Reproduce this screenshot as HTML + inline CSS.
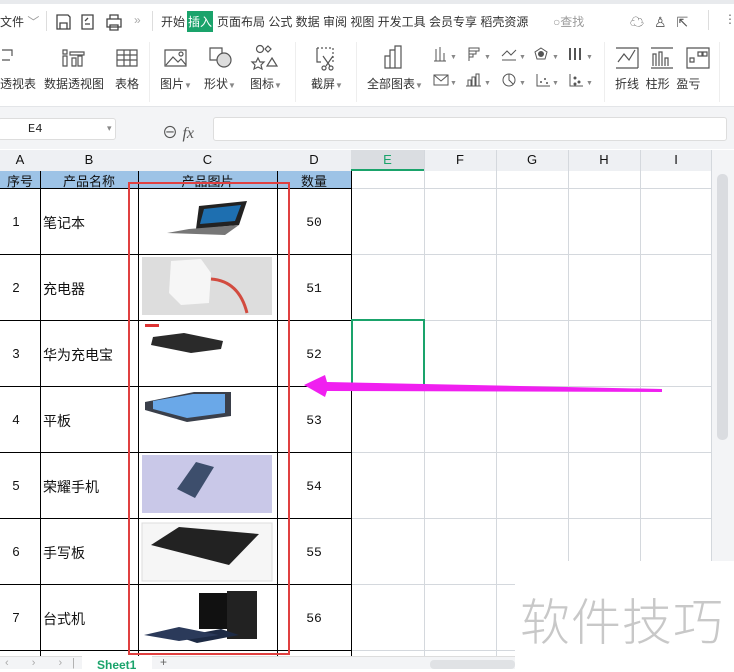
<!DOCTYPE html><html><head><meta charset="utf-8"><style>
*{margin:0;padding:0;box-sizing:border-box}
body{width:734px;height:669px;overflow:hidden;background:#fff;font-family:"Liberation Sans","Noto Sans CJK SC",sans-serif;position:relative;font-size:12px;color:#333}
.a{position:absolute}
.t{font-size:12px;white-space:nowrap}
.vl{position:absolute;width:1px;background:#d4d8dd}
.hz{position:absolute;height:1px;background:#d4d8dd}
.bk{position:absolute;background:#000}
.c{position:absolute;text-align:center;font-size:13px;color:#111}
</style></head><body>
<div class="a" style="left:0;top:0;width:734px;height:4px;background:#e8eaed"></div>
<div class="a t" style="left:0;top:13px">文件 <span style="color:#999">﹀</span></div>
<div class="a" style="left:46px;top:11px;width:1px;height:20px;background:#ddd"></div>
<svg class="a" style="left:54px;top:12px" width="75" height="20" fill="none" stroke="#444" stroke-width="1.3">
<path d="M3 3h11l2 2v12H3zM6 17v-6h7v6"/><path d="M28 3h11v14H28zM31 9l3-3M31 12h5"/><path d="M53 7h14v8H53zM56 7V3h8v4M56 13h8v5h-8z"/></svg>
<div class="a t" style="left:134px;top:13px;color:#aaa">»</div>
<div class="a" style="left:152px;top:11px;width:1px;height:20px;background:#ddd"></div>
<div class="a t" style="left:161px;top:13px">开始</div>
<div class="a t" style="left:187px;top:11px;background:#1aa36b;color:#fff;padding:2px 1px">插入</div>
<div class="a t" style="left:217px;top:13px">页面布局 公式 数据 审阅 视图 开发工具 会员专享 稻壳资源</div>
<div class="a t" style="left:553px;top:13px;color:#999">○查找</div>
<div class="a t" style="left:630px;top:12px;color:#555;font-size:14px;letter-spacing:10px">☁♙⇱</div>
<div class="a" style="left:708px;top:10px;width:1px;height:20px;background:#ddd"></div>
<div class="a t" style="left:724px;top:12px;color:#666">⋮</div>
<!-- ribbon -->
<div class="a t" style="left:0;top:75px">透视表</div>
<div class="a t" style="left:44px;top:75px">数据透视图</div>
<div class="a t" style="left:115px;top:75px">表格</div>
<div class="a" style="left:149px;top:42px;width:1px;height:60px;background:#eee"></div>
<div class="a t" style="left:160px;top:75px">图片<span style="font-size:8px;color:#888">▼</span></div>
<div class="a t" style="left:204px;top:75px">形状<span style="font-size:8px;color:#888">▼</span></div>
<div class="a t" style="left:250px;top:75px">图标<span style="font-size:8px;color:#888">▼</span></div>
<div class="a" style="left:295px;top:42px;width:1px;height:60px;background:#eee"></div>
<div class="a t" style="left:311px;top:75px">截屏<span style="font-size:8px;color:#888">▼</span></div>
<div class="a" style="left:356px;top:42px;width:1px;height:60px;background:#eee"></div>
<div class="a t" style="left:367px;top:75px">全部图表<span style="font-size:8px;color:#888">▼</span></div>
<div class="a" style="left:604px;top:42px;width:1px;height:60px;background:#eee"></div>
<div class="a t" style="left:615px;top:75px">折线&nbsp; 柱形&nbsp; 盈亏</div>
<div class="a" style="left:719px;top:42px;width:1px;height:60px;background:#eee"></div>
<svg class="a" style="left:0;top:44px" width="734" height="50" fill="none" stroke="#555" stroke-width="1.2">
<path d="M2 6h10v6M2 16h8"/><path d="M63 6h4v4h-4zM63 12h4v10h-4zM70 8h14v3H70zM72 14h4v8h-4zM78 12h4v10h-4z"/>
<path d="M117 6h20v16h-20zM117 11h20M117 16h20M124 6v16M130 6v16"/>
<path d="M165 6h21v16h-21zM166 21l7-8 5 5 3-3 5 6"/><circle cx="181" cy="10" r="2"/>
<path d="M210 4h12v12h-12z"/><circle cx="224" cy="16" r="7" fill="#ddd"/>
<circle cx="260" cy="5" r="3.5"/><path d="M268 2l3 3-3 3-3-3zM258 14l2 4 4 0-3 3 1 4-4-2-4 2 1-4-3-3 4 0zM272 14l5 8h-10z"/>
<path d="M317 4h16v14" stroke-dasharray="2 2"/><path d="M317 4v14h4"/><path d="M323 12l7 10M333 12l-7 10"/><circle cx="324" cy="24" r="2"/><circle cx="331" cy="24" r="2"/>
<path d="M385 12h5v12h-5zM390 6h5v18h-5zM395 2h6v22h-6z"/>
<g stroke-width="1">
<path d="M436 5v12M440 3v14M444 9v8M434 17h12"/><path d="M469 4h10v3h-10zM469 7h7v3h-7zM469 10h4v3h-4zM469 4v13"/><path d="M502 12l5-5 4 4 5-5M502 16h14"/><path d="M541 4l6 4-2 7h-8l-2-7z"/><circle cx="541" cy="10" r="2.5" fill="#555"/><path d="M570 4v12M575 4v12M580 4v12" stroke-width="2"/>
<path d="M434 31h14v10h-14zM434 31l7 6 7-6"/><path d="M468 42v-6h3v6M472 42v-9h3v9M476 42v-12h3v12M466 42h15"/><circle cx="509" cy="36" r="6"/><path d="M509 30v6l4 4"/><path d="M537 30v12h13"/><path d="M570 30v12h13"/>
</g>
<g fill="#555" stroke="none"><circle cx="541" cy="38" r="1"/><circle cx="545" cy="35" r="1"/><circle cx="547" cy="39" r="1"/><circle cx="575" cy="34" r="1.5"/><circle cx="579" cy="38" r="1.5"/><circle cx="575" cy="40" r="1.5"/></g>
<g fill="#888" stroke="none" font-size="7"><text x="450" y="15">▼</text><text x="484" y="15">▼</text><text x="519" y="15">▼</text><text x="552" y="15">▼</text><text x="586" y="15">▼</text><text x="450" y="41">▼</text><text x="484" y="41">▼</text><text x="519" y="41">▼</text><text x="552" y="41">▼</text><text x="586" y="41">▼</text></g>
<path d="M616 4h22v20M616 24h22M618 18l6-8 5 6 6-10"/>
<path d="M651 4h22M651 24h22M653 22v-12h3v12M659 22v-14h3v14M665 22v-8h3v8"/>
<path d="M687 4h22v20h-22zM690 14h4v4h-4zM698 8h4v4h-4zM703 8h4v4h-4z"/>
</svg>
<div class="a" style="left:0;top:106px;width:734px;height:1px;background:#e3e5e8"></div>
<!-- formula bar -->
<div class="a" style="left:0;top:107px;width:734px;height:42px;background:#f3f4f6"></div>
<div class="a" style="left:-2px;top:118px;width:118px;height:22px;background:#fff;border:1px solid #ddd;border-radius:3px"></div>
<div class="a t" style="left:28px;top:122px;font-family:'Liberation Mono',monospace;color:#222">E4</div>
<div class="a t" style="left:107px;top:123px;color:#888;font-size:9px">▾</div>
<div class="a t" style="left:162px;top:119px;font-size:16px;color:#555">⊖ <i style="font-family:'Liberation Serif',serif">fx</i></div>
<div class="a" style="left:213px;top:117px;width:514px;height:24px;background:#fff;border:1px solid #ddd;border-radius:3px"></div>
<!-- column headers -->
<div class="a" style="left:0;top:150px;width:712px;height:21px;background:#eef0f3"></div>
<div class="a" style="left:351px;top:150px;width:73px;height:21px;background:#dadde1;border-bottom:2px solid #1aa36b"></div>
<div class="c" style="left:0;width:40px;top:152px">A</div><div class="c" style="left:40px;width:98px;top:152px">B</div><div class="c" style="left:138px;width:139px;top:152px">C</div><div class="c" style="left:277px;width:74px;top:152px">D</div><div class="c" style="left:351px;width:73px;top:152px;color:#1aa36b">E</div><div class="c" style="left:424px;width:72px;top:152px">F</div><div class="c" style="left:496px;width:72px;top:152px">G</div><div class="c" style="left:568px;width:72px;top:152px">H</div><div class="c" style="left:640px;width:72px;top:152px">I</div>
<div class="vl" style="left:424px;top:150px;height:506px"></div><div class="vl" style="left:496px;top:150px;height:506px"></div><div class="vl" style="left:568px;top:150px;height:506px"></div><div class="vl" style="left:640px;top:150px;height:506px"></div><div class="vl" style="left:711px;top:150px;height:506px"></div>
<div class="hz" style="left:351px;top:188px;width:361px"></div><div class="hz" style="left:351px;top:254px;width:361px"></div><div class="hz" style="left:351px;top:320px;width:361px"></div><div class="hz" style="left:351px;top:386px;width:361px"></div><div class="hz" style="left:351px;top:452px;width:361px"></div><div class="hz" style="left:351px;top:518px;width:361px"></div><div class="hz" style="left:351px;top:584px;width:361px"></div><div class="hz" style="left:351px;top:650px;width:361px"></div>
<div class="a" style="left:0;top:171px;width:351px;height:17px;background:#9dc3e6"></div>
<div class="c" style="left:0;width:40px;top:171px">序号</div><div class="c" style="left:40px;width:98px;top:171px">产品名称</div><div class="c" style="left:138px;width:139px;top:171px">产品图片</div><div class="c" style="left:277px;width:74px;top:171px">数量</div>
<div class="bk" style="left:40px;top:171px;width:1px;height:485px"></div><div class="bk" style="left:138px;top:171px;width:1px;height:485px"></div><div class="bk" style="left:277px;top:171px;width:1px;height:485px"></div><div class="bk" style="left:351px;top:171px;width:1px;height:485px"></div>
<div class="bk" style="left:0;top:188px;width:352px;height:1px"></div><div class="bk" style="left:0;top:254px;width:352px;height:1px"></div><div class="bk" style="left:0;top:320px;width:352px;height:1px"></div><div class="bk" style="left:0;top:386px;width:352px;height:1px"></div><div class="bk" style="left:0;top:452px;width:352px;height:1px"></div><div class="bk" style="left:0;top:518px;width:352px;height:1px"></div><div class="bk" style="left:0;top:584px;width:352px;height:1px"></div><div class="bk" style="left:0;top:650px;width:352px;height:1px"></div>
<div class="c" style="left:0;width:32px;top:214px">1</div><div class="a t" style="left:43px;top:213px;font-size:14px;color:#111">笔记本</div><div class="c" style="left:277px;width:74px;top:215px;font-family:'Liberation Mono',monospace">50</div>
<div class="c" style="left:0;width:32px;top:280px">2</div><div class="a t" style="left:43px;top:279px;font-size:14px;color:#111">充电器</div><div class="c" style="left:277px;width:74px;top:281px;font-family:'Liberation Mono',monospace">51</div>
<div class="c" style="left:0;width:32px;top:346px">3</div><div class="a t" style="left:43px;top:345px;font-size:14px;color:#111">华为充电宝</div><div class="c" style="left:277px;width:74px;top:347px;font-family:'Liberation Mono',monospace">52</div>
<div class="c" style="left:0;width:32px;top:412px">4</div><div class="a t" style="left:43px;top:411px;font-size:14px;color:#111">平板</div><div class="c" style="left:277px;width:74px;top:413px;font-family:'Liberation Mono',monospace">53</div>
<div class="c" style="left:0;width:32px;top:478px">5</div><div class="a t" style="left:43px;top:477px;font-size:14px;color:#111">荣耀手机</div><div class="c" style="left:277px;width:74px;top:479px;font-family:'Liberation Mono',monospace">54</div>
<div class="c" style="left:0;width:32px;top:544px">6</div><div class="a t" style="left:43px;top:543px;font-size:14px;color:#111">手写板</div><div class="c" style="left:277px;width:74px;top:545px;font-family:'Liberation Mono',monospace">55</div>
<div class="c" style="left:0;width:32px;top:610px">7</div><div class="a t" style="left:43px;top:609px;font-size:14px;color:#111">台式机</div><div class="c" style="left:277px;width:74px;top:611px;font-family:'Liberation Mono',monospace">56</div>
<svg class="a" style="left:139px;top:189px" width="138" height="461">
<polygon points="60,17 108,12 100,36 57,40" fill="#222"/><polygon points="65,20 102,16 96,32 61,35" fill="#1e6fb0"/><polygon points="28,44 50,40 100,36 86,46" fill="#777"/>
<rect x="3" y="68" width="130" height="58" fill="#ddd"/><polygon points="32,72 62,70 72,84 70,114 42,116 30,104" fill="#f6f6f6"/><path d="M72,90 Q100,92 108,124" stroke="#d24b3f" stroke-width="3" fill="none"/>
<rect x="6" y="135" width="14" height="3" fill="#d33"/><polygon points="14,148 45,144 84,152 82,160 52,164 12,156" fill="#2a2a2a"/>
<polygon points="6,213 55,203 92,203 92,227 48,233 6,221" fill="#3a3f4a"/><polygon points="14,212 54,205 86,205 86,224 48,229 14,220" fill="#6aa8e8"/>
<rect x="3" y="266" width="130" height="58" fill="#c9c8e8"/><polygon points="38,300 57,273 75,278 56,309" fill="#3d4e6c"/>
<rect x="3" y="334" width="130" height="58" fill="#f6f6f6" stroke="#ddd"/><polygon points="12,356 40,338 120,345 90,376" fill="#222"/>
<rect x="60" y="404" width="50" height="36" fill="#111"/><rect x="88" y="402" width="30" height="48" fill="#222"/><polygon points="40,448 82,440 100,446 58,454" fill="#1d2a44"/><polygon points="5,446 40,438 80,446 40,452" fill="#2b3a5a"/>
</svg>
<div class="a" style="left:128px;top:182px;width:162px;height:473px;border:2px solid #e04040"></div>
<div class="a" style="left:351px;top:319px;width:74px;height:67px;border:2px solid #1aa36b;border-bottom:none"></div>
<svg class="a" style="left:300px;top:372px" width="370" height="28"><polygon points="4,13 25,3 27,10 362,17 362,20 27,19 25,25" fill="#f020f0"/></svg>
<div class="a" style="left:712px;top:150px;width:22px;height:506px;background:#f3f4f6"></div>
<div class="a" style="left:717px;top:174px;width:11px;height:266px;background:#dadce0;border-radius:5px"></div>
<div class="a" style="left:0;top:656px;width:515px;height:13px;background:#f3f4f6;border-top:1px solid #ddd"></div>
<div class="a t" style="left:5px;top:657px;color:#aaa;letter-spacing:10px;font-size:11px">‹ › ›|</div>
<div class="a" style="left:82px;top:656px;width:70px;height:13px;background:#fff"></div>
<div class="a t" style="left:97px;top:658px;color:#1aa36b;font-weight:bold;font-size:12px">Sheet1</div>
<div class="a t" style="left:160px;top:655px;color:#666">+</div>
<div class="a" style="left:430px;top:660px;width:85px;height:9px;background:#e0e2e5;border-radius:4px"></div>
<div class="a" style="left:515px;top:561px;width:219px;height:108px;background:#fff"></div>
<div class="a t" style="left:520px;top:583px;font-size:50px;color:#c8c8c8;letter-spacing:1px;font-family:'Noto Sans CJK SC',sans-serif;font-weight:300">软件技巧</div>
</body></html>
